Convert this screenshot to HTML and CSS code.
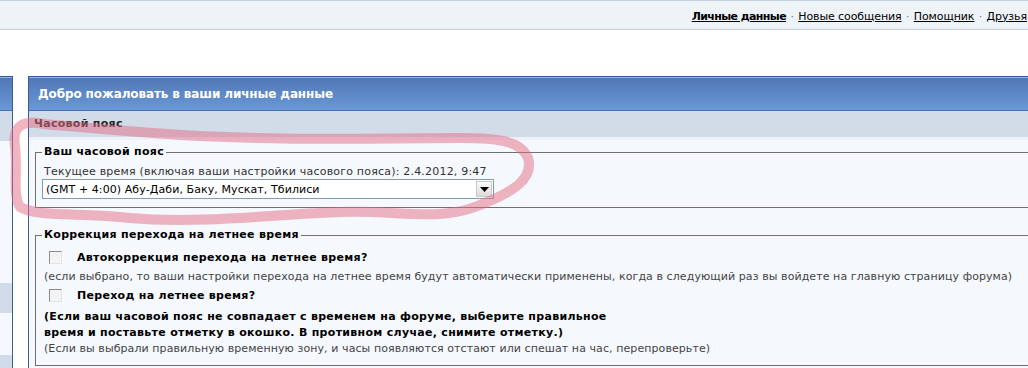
FILE: index.html
```html
<!DOCTYPE html>
<html lang="ru">
<head>
    <meta charset="UTF-8">
    <title>Личные данные</title>
    <link rel="stylesheet" href="styles.css">
</head>
<body>
    <div class="topbar">
        <nav class="toplinks">
            <a href="#" class="current">Личные данные</a>
            <span class="sep">·</span>
            <a href="#">Новые сообщения</a>
            <span class="sep">·</span>
            <a href="#">Помощник</a>
            <span class="sep">·</span>
            <a href="#">Друзья</a>
        </nav>
    </div>

    <div class="layout">
        <aside class="sidebar">
            <div class="side-head"></div>
            <div class="side-band"></div>
            <div class="side-row"></div>
            <div class="side-band"></div>
            <div class="side-row short"></div>
            <div class="side-band"></div>
        </aside>

        <main class="panel">
            <div class="panel-head">Добро пожаловать в ваши личные данные</div>
            <div class="panel-sub">Часовой пояс</div>

            <div class="panel-body">
                <fieldset class="group tz">
                    <legend>Ваш часовой пояс</legend>
                    <div class="line">Текущее время (включая ваши настройки часового пояса): 2.4.2012, 9:47</div>
                    <div class="select-box">
                        <span class="select-value">(GMT + 4:00) Абу-Даби, Баку, Мускат, Тбилиси</span>
                        <span class="select-btn">
                            <svg width="9" height="5" viewBox="0 0 9 5"><path d="M0 0h9L4.5 5z" fill="#000"/></svg>
                        </span>
                    </div>
                </fieldset>

                <fieldset class="group dst">
                    <legend>Коррекция перехода на летнее время</legend>
                    <label class="check-row">
                        <input type="checkbox" class="check">
                        <span>Автокоррекция перехода на летнее время?</span>
                    </label>
                    <div class="hint">(если выбрано, то ваши настройки перехода на летнее время будут автоматически применены, когда в следующий раз вы войдете на главную страницу форума)</div>
                    <label class="check-row">
                        <input type="checkbox" class="check">
                        <span>Переход на летнее время?</span>
                    </label>
                    <p class="warn">(Если ваш часовой пояс не совпадает с временем на форуме, выберите правильное<br>время и поставьте отметку в окошко. В противном случае, снимите отметку.)</p>
                    <div class="hint tight">(Если вы выбрали правильную временную зону, и часы появляются отстают или спешат на час, перепроверьте)</div>
                </fieldset>
            </div>
        </main>
    </div>

    <!-- пометка маркером поверх скриншота -->
    <svg class="scribble" width="1028" height="368" viewBox="0 0 1028 368">
        <path d="M44 124 C22 120 12 126 15 146 C18 170 12 194 20 207 C40 218 80 212 130 218 C200 224 280 214 340 212 C400 210 440 222 480 205 C514 192 534 178 528 158 C521 141 500 138 460 138 C380 138 300 141 200 136 C130 132 80 127 44 124" fill="none" stroke="rgba(228,108,132,0.5)" stroke-width="10" stroke-linecap="round" stroke-linejoin="round"/>
    </svg>
</body>
</html>
```

FILE: styles.css
```css
:root {
    --dark-blue: #3a5a9c;
    --band: #d1dce8;
    --light-bg: #f5f8fc;
}

body {
    margin: 0;
    font-family: "DejaVu Sans", Verdana, sans-serif;
    font-size: 11px;
    letter-spacing: 0.08px;
    color: #333;
    background: #fff;
    overflow: hidden;
    height: 368px;
    position: relative;
}

/* верхняя полоса со ссылками */
.topbar {
    height: 28px;
    background: #eef3f8;
    border-top: 1px solid #c3cfdd;
    border-bottom: 1px solid #c8cce0;
    display: flex;
    justify-content: flex-end;
    align-items: center;
}

.toplinks {
    white-space: nowrap;
    margin-right: 1px;
    padding-top: 2px;
    letter-spacing: -0.1px;
}

.toplinks a {
    color: #000;
    text-decoration: underline;
}

.toplinks a.current {
    font-weight: bold;
    letter-spacing: -0.6px;
}

.toplinks .sep {
    color: #777;
    margin: 0 1px;
}

.layout {
    display: flex;
    gap: 15px;
    margin-top: 46px;
}

/* обрезанная левая колонка */
.sidebar {
    width: 12px;
    flex: none;
    border-top: 1px solid var(--dark-blue);
    border-right: 1px solid var(--dark-blue);
    background: var(--light-bg);
    height: 300px;
}

.side-head {
    height: 32px;
    border-top: 1px solid #8fb0df;
    background: linear-gradient(#5177b5, #6a98d8);
    border-bottom: 1px solid #4a70b0;
}

.side-band {
    height: 30px;
    background: var(--band);
}

.side-row {
    height: 142px;
}

.side-row.short {
    height: 42px;
}

/* основная панель */
.panel {
    width: 1060px;
    flex: none;
    border-top: 1px solid var(--dark-blue);
    border-left: 1px solid var(--dark-blue);
    background: var(--light-bg);
    height: 300px;
}

.panel-head {
    height: 32px;
    border-top: 1px solid #8fb0df;
    border-bottom: 1px solid #4a70b0;
    background: linear-gradient(#5177b5, #6a98d8);
    color: #fff;
    font-size: 12px;
    font-weight: bold;
    letter-spacing: -0.12px;
    line-height: 33px;
    padding-left: 9px;
}

.panel-sub {
    height: 26px;
    line-height: 26px;
    background: var(--band);
    color: #222;
    font-weight: bold;
    letter-spacing: 0.3px;
    padding-left: 5px;
}

.panel-body {
    border-top: 3px solid #eef2f8;
    padding: 5px 0 0 6px;
}

.group {
    margin: 0;
    border: 1px solid #707070;
    border-right: none;
    padding: 0 0 0 8px;
}

.group legend {
    font-weight: bold;
    letter-spacing: 0.3px;
    color: #000;
    padding: 0 2px 0 2px;
    margin-left: -2px;
    line-height: 14px;
}

.tz {
    padding-top: 5px;
    padding-bottom: 8px;
}

.line {
    line-height: 15px;
    letter-spacing: 0.2px;
}

.select-box {
    width: 450px;
    height: 18px;
    border: 1px solid #7f9db9;
    background: #fff;
    display: flex;
    align-items: center;
    margin-left: -2px;
}

.select-value {
    flex: 1;
    padding-left: 3px;
    color: #000;
}

.select-btn {
    width: 16px;
    height: 16px;
    margin-right: 1px;
    background: linear-gradient(#fafafa, #dcdcdc);
    border: 1px solid #c8c8c8;
    box-sizing: border-box;
    display: flex;
    align-items: center;
    justify-content: center;
}

.dst {
    margin-top: 20px;
    padding-top: 6px;
    padding-bottom: 8px;
}

.check-row {
    display: flex;
    align-items: center;
    height: 19px;
    font-weight: bold;
    letter-spacing: 0.3px;
    color: #000;
}

.check {
    appearance: none;
    width: 13px;
    height: 13px;
    margin: 0 15px 0 5px;
    background: #f3f3f3;
    border-top: 1px solid #8c8c8c;
    border-left: 1px solid #8c8c8c;
    border-right: 1px solid #e4e4e4;
    border-bottom: 1px solid #e4e4e4;
    box-sizing: border-box;
}

.hint {
    line-height: 19px;
    color: #444;
    white-space: nowrap;
}

.hint.tight {
    line-height: 16px;
}

.warn {
    margin: 4px 0 0;
    font-weight: bold;
    letter-spacing: 0.3px;
    color: #000;
    line-height: 16px;
}

.scribble {
    position: absolute;
    left: 0;
    top: 0;
    pointer-events: none;
}
```
